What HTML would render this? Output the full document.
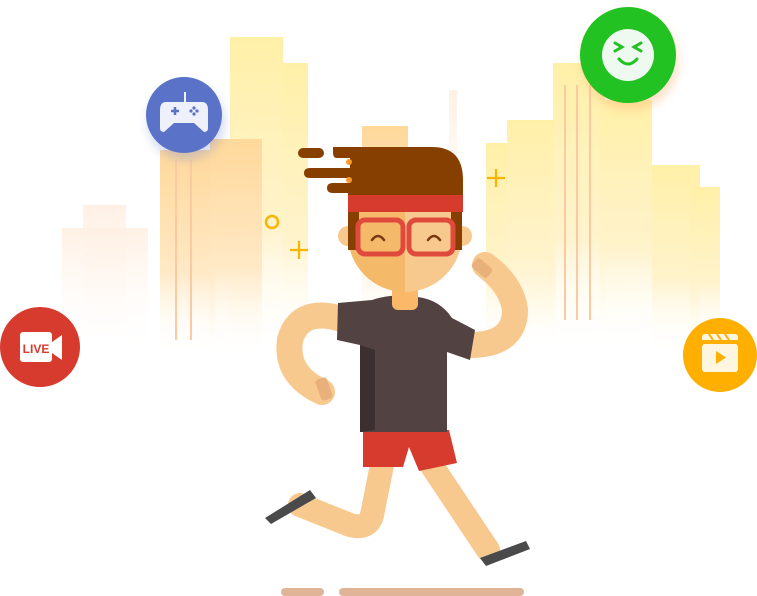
<!DOCTYPE html>
<html><head><meta charset="utf-8"><style>
html,body{margin:0;padding:0;background:#fff;width:757px;height:596px;overflow:hidden;font-family:"Liberation Sans",sans-serif}
</style></head><body>
<svg width="757" height="596" viewBox="0 0 757 596" xmlns="http://www.w3.org/2000/svg">
<defs>
<linearGradient id="y" x1="0" y1="0" x2="0" y2="1"><stop offset="0" stop-color="#fff0a8"/><stop offset="0.6" stop-color="#fff3cc"/><stop offset="1" stop-color="#fff" stop-opacity="0"/></linearGradient>
<linearGradient id="o" x1="0" y1="0" x2="0" y2="1"><stop offset="0" stop-color="#ffd89a"/><stop offset="0.6" stop-color="#ffe9c6"/><stop offset="1" stop-color="#fff" stop-opacity="0"/></linearGradient>
<linearGradient id="f" x1="0" y1="0" x2="0" y2="1"><stop offset="0" stop-color="#fff0e4"/><stop offset="1" stop-color="#fff" stop-opacity="0"/></linearGradient>
<filter id="sh" x="-50%" y="-50%" width="200%" height="200%"><feGaussianBlur stdDeviation="5"/></filter>
</defs>
<rect x="83" y="205" width="43" height="150" fill="url(#f)"/>
<rect x="62" y="228" width="86" height="130" fill="url(#f)"/>
<rect x="230" y="37" width="53" height="320" fill="url(#y)"/>
<rect x="283" y="63" width="25" height="294" fill="url(#y)"/>
<rect x="160" y="150" width="55" height="205" fill="url(#o)"/>
<rect x="210" y="139" width="52" height="215" fill="url(#o)"/>
<line x1="176" y1="160" x2="176" y2="340" stroke="#fcc9a0" stroke-width="2"/>
<line x1="191" y1="160" x2="191" y2="340" stroke="#fcc9a0" stroke-width="2"/>
<rect x="362" y="126" width="46" height="200" fill="url(#o)"/>
<rect x="449" y="90" width="8" height="200" fill="url(#f)"/>
<rect x="486" y="143" width="70" height="210" fill="url(#y)"/>
<rect x="507" y="120" width="46" height="230" fill="url(#y)"/>
<rect x="553" y="63" width="52" height="290" fill="url(#y)"/>
<line x1="565" y1="85" x2="565" y2="320" stroke="#fcc9a0" stroke-width="2"/>
<line x1="577" y1="85" x2="577" y2="320" stroke="#fcc9a0" stroke-width="2"/>
<line x1="590" y1="85" x2="590" y2="320" stroke="#fcc9a0" stroke-width="2"/>
<rect x="600" y="100" width="52" height="250" fill="url(#y)"/>
<rect x="652" y="165" width="48" height="190" fill="url(#y)"/>
<rect x="690" y="187" width="30" height="160" fill="url(#y)"/>
<circle cx="272" cy="222" r="6" fill="none" stroke="#f7b500" stroke-width="2.5"/>
<g stroke="#f7b500" stroke-width="2.2"><path d="M299 241v18M290 250h18M496 169v18M487 178h18"/></g>
<circle cx="186" cy="122" r="38" fill="#7c8fd8" opacity=".35" filter="url(#sh)"/>
<circle cx="184" cy="115" r="38" fill="#5a72c8"/>
<path d="M166 102h36q6 0 6 8v18q0 4-4 4l-10-9h-20l-10 9q-4 0-4-4v-18q0-8 6-8z" fill="#eef0fb"/>
<line x1="185" y1="92" x2="185" y2="102" stroke="#eef0fb" stroke-width="2"/>
<path d="M171 111h8M175 107v8" stroke="#5a72c8" stroke-width="2.5"/>
<g fill="#5a72c8"><circle cx="194" cy="108" r="1.6"/><circle cx="194" cy="114" r="1.6"/><circle cx="191" cy="111" r="1.6"/><circle cx="197" cy="111" r="1.6"/></g>
<circle cx="630" cy="62" r="48" fill="#ffb070" opacity=".4" filter="url(#sh)"/>
<circle cx="628" cy="55" r="48" fill="#22c222"/>
<circle cx="628" cy="55" r="26" fill="#eefaf0"/>
<path d="M615 43l7 4-7 4M641 43l-7 4 7 4M619 59q9 10 18 0" fill="none" stroke="#22c222" stroke-width="3" stroke-linecap="round"/>
<circle cx="40" cy="347" r="40" fill="#d63b2e"/>
<rect x="20" y="332" width="32" height="30" rx="3" fill="#fff"/>
<path d="M52 342l10-7v25l-10-7z" fill="#fff"/>
<text x="36" y="353" font-size="12" font-weight="bold" fill="#d63b2e" text-anchor="middle">LIVE</text>
<circle cx="720" cy="355" r="37" fill="#ffaf00"/>
<rect x="702" y="344" width="36" height="28" rx="3" fill="#fff6e0"/>
<path d="M702 340h36v-3a3 3 0 0 0-3-3h-30a3 3 0 0 0-3 3z" fill="#fff6e0"/>
<path d="M709 334l4 6M717 334l4 6M725 334l4 6" stroke="#ffaf00" stroke-width="2"/>
<path d="M716 351v13l10-6.5z" fill="#ffaf00"/>
<rect x="281" y="588" width="43" height="8" rx="4" fill="#e0b497"/>
<rect x="339" y="588" width="185" height="8" rx="4" fill="#e0b497"/>
<path d="M383 460 L372 515 Q368 530 350 525 L300 505" fill="none" stroke="#f8c98e" stroke-width="24" stroke-linecap="round" stroke-linejoin="round"/>
<path d="M265 518 L310 490 L316 498 L271 524z" fill="#4a4a4a"/>
<path d="M428 460 L488 550" fill="none" stroke="#f8c98e" stroke-width="24" stroke-linecap="round"/>
<path d="M480 558 L526 541 L530 549 L486 566z" fill="#4a4a4a"/>
<path d="M363 430h86l8 33-38 8-10-24-6 20h-40z" fill="#d63b2e"/>
<path d="M345 320 Q300 305 290 340 Q285 375 322 392" fill="none" stroke="#f8c98e" stroke-width="26" stroke-linecap="round"/>
<rect x="318" y="378" width="12" height="22" rx="3" fill="#e8b07a" transform="rotate(-20 324 389)"/>
<path d="M470 345 Q515 345 515 310 Q512 285 485 265" fill="none" stroke="#f8c98e" stroke-width="26" stroke-linecap="round"/>
<rect x="476" y="258" width="12" height="20" rx="3" fill="#e8b07a" transform="rotate(-50 482 268)"/>
<path d="M338 303 L372 300 Q392 293 418 297 Q440 300 452 318 L475 330 L470 360 L447 352 L447 432 L360 432 L360 345 L337 340z" fill="#524242"/>
<path d="M360 345 L375 350 L375 430 L360 432z" fill="#3c2f2f"/>
<rect x="392" y="282" width="26" height="28" rx="6" fill="#fbb868"/>
<circle cx="348" cy="236" r="10" fill="#f8c98e"/>
<circle cx="462" cy="236" r="10" fill="#f8c98e"/>
<path d="M405 178 A57 57 0 0 0 405 292z" fill="#f5b96a"/>
<path d="M405 178 A57 57 0 0 1 405 292z" fill="#f8c98e"/>
<rect x="348" y="205" width="11" height="45" fill="#873f00"/>
<rect x="451" y="205" width="11" height="45" fill="#873f00"/>
<path d="M333 147 H432 Q463 147 463 180 V198 H348 V193 H333 Q327 193 327 188 Q327 183 333 183 H350 V178 H310 Q304 178 304 173 Q304 168 310 168 H350 V158 H337 Q333 158 333 153z" fill="#873f00"/>
<rect x="298" y="148" width="26" height="10" rx="5" fill="#873f00"/>
<circle cx="349" cy="162" r="3" fill="#ff9a30"/><circle cx="349" cy="180" r="3" fill="#ff9a30"/>
<rect x="348" y="195" width="115" height="17" fill="#d63b2e"/>
<g fill="none" stroke="#e04a3c" stroke-width="5">
<rect x="358" y="220" width="45" height="34" rx="7"/>
<rect x="409" y="220" width="44" height="34" rx="7"/>
</g>
<path d="M372 240q6-8 12 0M428 240q6-8 12 0" fill="none" stroke="#7a3a10" stroke-width="2.5" stroke-linecap="round"/>
</svg>
</body></html>
